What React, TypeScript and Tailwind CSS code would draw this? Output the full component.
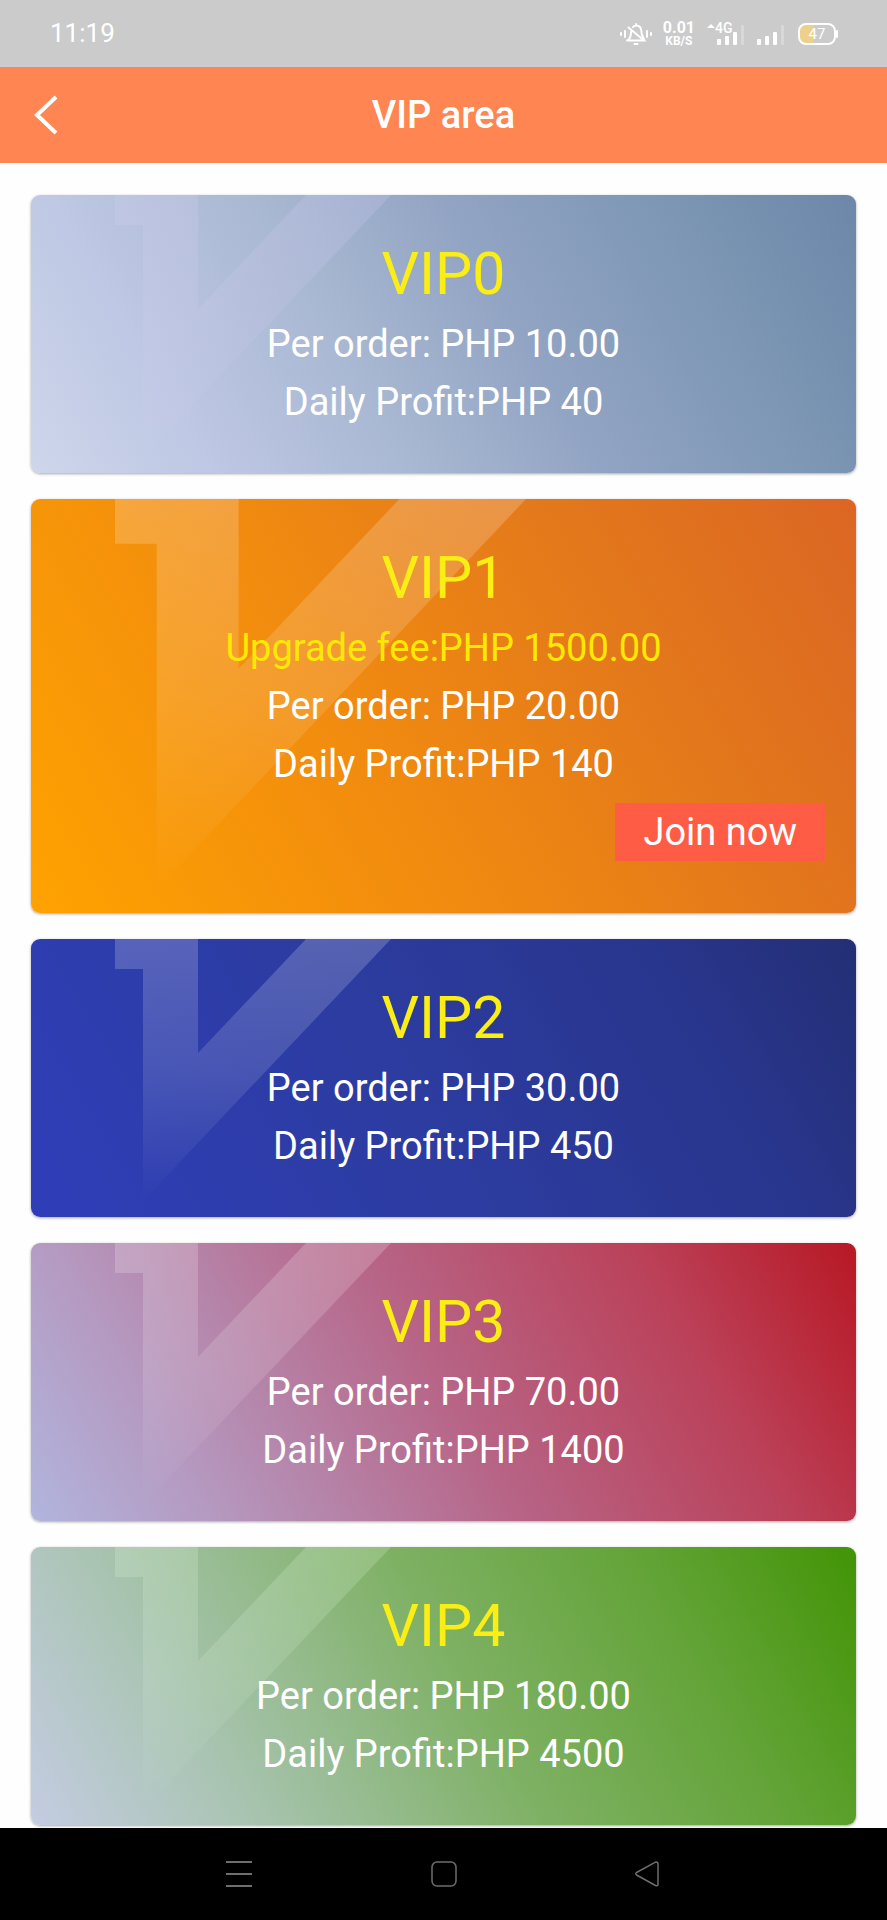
import { clsx } from "clsx";

type Level = {
  name: string;
  fee?: string;
  perOrder: string;
  profit: string;
  background: string;
  mark?: string;
};

const levels: Level[] = [
  {
    name: "VIP0",
    perOrder: "10.00",
    profit: "40",
    background:
      "bg-[linear-gradient(60deg,#cdd6ea_0%,#bfc8e4_18%,#a5b5d0_42%,#92a4c3_58%,#7e98b5_78%,#6c87a9_100%)]",
    mark: "#dcd2fa",
  },
  {
    name: "VIP1",
    fee: "1500.00",
    perOrder: "20.00",
    profit: "140",
    background: "bg-[linear-gradient(60deg,#ffa200_0%,#f08a10_42%,#e47a1a_68%,#db6624_100%)]",
  },
  {
    name: "VIP2",
    perOrder: "30.00",
    profit: "450",
    background: "bg-[linear-gradient(60deg,#2f3eb8_0%,#2c3ca0_45%,#29368e_78%,#232f74_100%)]",
  },
  {
    name: "VIP3",
    perOrder: "70.00",
    profit: "1400",
    background: "bg-[linear-gradient(60deg,#b1b5de_0%,#b597be_20%,#b76486_50%,#bb4058_78%,#b81824_100%)]",
  },
  {
    name: "VIP4",
    perOrder: "180.00",
    profit: "4500",
    background: "bg-[linear-gradient(60deg,#c4cce2_0%,#a9c4b2_22%,#7fb165_52%,#62a336_78%,#429406_100%)]",
    mark: "#eaffe6",
  },
];

function SignalBars() {
  return (
    <g fill="#fff">
      <rect x="0" y="14" width="4" height="6" rx="1" />
      <rect x="8" y="11" width="4" height="9" rx="1" />
      <rect x="16" y="7" width="4" height="13" rx="1" />
      <rect x="24" y="0" width="3" height="20" rx="1" opacity="0.25" />
    </g>
  );
}

function StatusBar() {
  return (
    <div className="flex h-[67px] items-center justify-between bg-[#cbcbcb] pr-12 pl-[50px] text-white">
      <span className="text-[26px]">11:19</span>
      <div className="flex items-center">
        <svg className="mr-2.5" width="34" height="24" viewBox="0 0 34 24" fill="none" stroke="#fff" strokeWidth="2" strokeLinecap="round">
          <path d="M2 11v2M6 9v6M28 9v6M32 11v2" />
          <path d="M8 18.500h17L9.500 5.500M9 18c3-2 3-5 3-8M14 5c2-2 5-2 7 0s1 5 2 8l2 4M17 2v2" />
          <path d="M15.500 22h3" />
        </svg>
        <div className="mr-3 flex flex-col items-center font-bold">
          <span className="text-base leading-[15px]">0.01</span>
          <span className="text-xs leading-[13px]">KB/S</span>
        </div>
        <svg className="mr-3" width="38" height="26" viewBox="0 0 38 26">
          <path d="M0 7l4-4 4 4z" fill="#fff" />
          <text x="8" y="12" fill="#fff" fontSize="14" fontWeight="500">
            4G
          </text>
          <g transform="translate(10 4)">
            <SignalBars />
          </g>
        </svg>
        <svg className="mr-3" width="28" height="26" viewBox="0 0 28 26">
          <g transform="translate(0 4)">
            <SignalBars />
          </g>
        </svg>
        <svg width="42" height="24" viewBox="0 0 42 24">
          <path d="M8 3h9v18H8a5 5 0 0 1-5-5V8a5 5 0 0 1 5-5z" fill="#ecd08c" />
          <rect x="2" y="2" width="36" height="20" rx="7" fill="none" stroke="#fff" strokeWidth="2" />
          <path d="M40 9v6" stroke="#fff" strokeWidth="2" strokeLinecap="round" />
          <text x="20" y="17" fill="#fff" fontSize="15" textAnchor="middle">
            47
          </text>
        </svg>
      </div>
    </div>
  );
}

function Watermark({ id, color = "#fff" }: { id: string; color?: string }) {
  return (
    <svg className="absolute top-0 left-[84px] h-full" viewBox="0 0 276 278" aria-hidden="true">
      <defs>
        <linearGradient id={id} x1="0" y1="0" x2="0" y2="1">
          <stop offset="0" stopColor={color} stopOpacity="0.2" />
          <stop offset="0.5" stopColor={color} stopOpacity="0.13" />
          <stop offset="1" stopColor={color} stopOpacity="0" />
        </linearGradient>
      </defs>
      <path d="M0 0H83V114L191 0H276L28 262V30H0z" fill={`url(#${id})`} />
    </svg>
  );
}

function LevelCard({ level }: { level: Level }) {
  return (
    <section
      className={clsx(
        "relative overflow-hidden rounded-[9px] px-[31px] pt-[37px] pb-[42px] text-center shadow-[0_1px_3px_rgba(0,0,0,0.35)]",
        level.background
      )}
    >
      <Watermark id={`mark-${level.name}`} color={level.mark} />
      <div className="relative text-[38px] leading-[58px] text-white">
        <h2 className="text-[59px] leading-[83px] text-[#fbee14]">{level.name}</h2>
        {level.fee && <p className="text-[#fde805]">Upgrade fee:PHP {level.fee}</p>}
        <p>Per order: PHP {level.perOrder}</p>
        <p>Daily Profit:PHP {level.profit}</p>
        {level.fee && (
          <div className="my-[10px] flex justify-end">
            <button type="button" className="bg-[#ff5c46] px-7">
              Join now
            </button>
          </div>
        )}
      </div>
    </section>
  );
}

function NavBar() {
  return (
    <nav className="sticky bottom-0 grid h-[92px] grid-cols-[1fr_auto_1fr] items-center bg-black px-[226px]">
      <button type="button" aria-label="Recent apps" className="justify-self-start">
        <svg width="26" height="28" viewBox="0 0 26 28" stroke="#6e6e6e" strokeWidth="2">
          <path d="M0 2h26M0 14h26M0 26h26" />
        </svg>
      </button>
      <button type="button" aria-label="Home">
        <svg width="26" height="28" viewBox="0 0 26 28" fill="none" stroke="#6e6e6e" strokeWidth="1.5">
          <rect x="1" y="2" width="24" height="24" rx="5" />
        </svg>
      </button>
      <button type="button" aria-label="Back" className="justify-self-end">
        <svg width="26" height="28" viewBox="0 0 26 28" fill="none" stroke="#6e6e6e" strokeWidth="1.5" strokeLinejoin="round">
          <path d="M1.500 12.500L20.500 2.200Q23 1.500 23 4V24Q23 26.500 20.500 25.500L1.500 15Q0 13.700 1.500 12.500z" />
        </svg>
      </button>
    </nav>
  );
}

export default function App() {
  return (
    <div className="flex min-h-screen flex-col bg-[#fefefe] font-['Roboto',sans-serif]">
      <StatusBar />
      <header className="grid h-24 grid-cols-[1fr_auto_1fr] items-center bg-[#ff8552] px-[33px] text-white">
        <button type="button" aria-label="Back" className="justify-self-start">
          <svg width="26" height="40" viewBox="0 0 26 40" fill="none" stroke="#fff" strokeWidth="4">
            <path d="M23 2L4 20L23 38" />
          </svg>
        </button>
        <h1 className="text-[38px] font-medium">VIP area</h1>
      </header>
      <main className="flex flex-1 flex-col gap-[26px] px-[31px] pt-8 pb-[3px]">
        {levels.map((level) => (
          <LevelCard key={level.name} level={level} />
        ))}
      </main>
      <NavBar />
    </div>
  );
}
